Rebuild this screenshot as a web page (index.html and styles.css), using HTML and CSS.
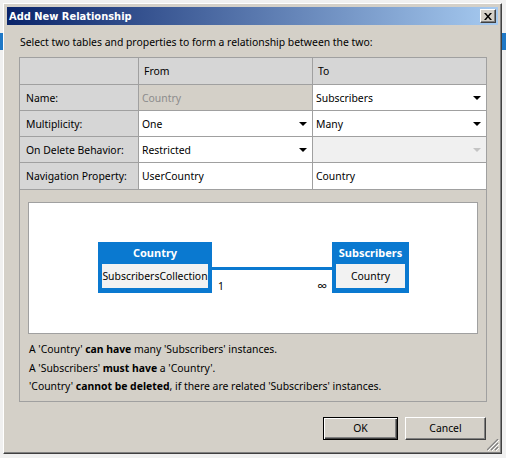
FILE: index.html
```html
<!DOCTYPE html>
<html lang="en">
<head>
    <meta charset="UTF-8">
    <title>Add New Relationship</title>
    <link rel="stylesheet" href="styles.css">
</head>
<body>
    <div class="dialog">
        <div class="title-bar">
            <span class="title-text">Add New Relationship</span>
            <button class="close-btn" aria-label="Close">
                <svg width="8" height="7" viewBox="0 0 8 7"><path d="M0 0h2l2 2.5L6 0h2L5 3.5 8 7H6L4 4.5 2 7H0l3-3.5z" fill="#000"/></svg>
            </button>
        </div>
        <div class="dialog-body">
            <p class="intro">Select two tables and properties to form a relationship between the two:</p>
            <div class="panel">
                <div class="grid">
                    <div class="cell head"></div>
                    <div class="cell head col-head">From</div>
                    <div class="cell head col-head">To</div>

                    <div class="cell head label">Name:</div>
                    <div class="cell value readonly">Country</div>
                    <div class="cell value">Subscribers <span class="arrow"></span></div>

                    <div class="cell head label">Multiplicity:</div>
                    <div class="cell value">One <span class="arrow"></span></div>
                    <div class="cell value">Many <span class="arrow"></span></div>

                    <div class="cell head label">On Delete Behavior:</div>
                    <div class="cell value">Restricted <span class="arrow"></span></div>
                    <div class="cell value disabled"><span></span><span class="arrow"></span></div>

                    <div class="cell head label">Navigation Property:</div>
                    <div class="cell value">UserCountry</div>
                    <div class="cell value">Country</div>
                </div>

                <div class="diagram">
                    <div class="entity entity-from">
                        <div class="entity-name">Country</div>
                        <div class="entity-prop">SubscribersCollection</div>
                    </div>
                    <div class="link">
                        <span>1</span>
                        <span class="many">∞</span>
                    </div>
                    <div class="entity entity-to">
                        <div class="entity-name">Subscribers</div>
                        <div class="entity-prop">Country</div>
                    </div>
                </div>

                <div class="summary">
                    <p>A 'Country' <b>can have</b> many 'Subscribers' instances.</p>
                    <p>A 'Subscribers' <b>must have</b> a 'Country'.</p>
                    <p>'Country' <b>cannot be deleted</b>, if there are related 'Subscribers' instances.</p>
                </div>
            </div>
            <div class="buttons">
                <button class="btn btn-default">OK</button>
                <button class="btn btn-cancel">Cancel</button>
            </div>
        </div>
        <svg class="grip" width="12" height="12" viewBox="0 0 12 12">
            <path d="M11 0L0 11M11 4L4 11M11 8L8 11" stroke="#808080" stroke-width="1.2"/>
            <path d="M12 1L1 12M12 5L5 12M12 9L9 12" stroke="#ffffff" stroke-width="1"/>
        </svg>
    </div>
</body>
</html>
```

FILE: styles.css
```css
* {
    box-sizing: border-box;
}
html, body {
    margin: 0;
}
body {
    width: 506px;
    height: 458px;
    padding: 3px 0 0 3px;
    overflow: hidden;
    background: linear-gradient(to bottom, #f0f0f0 0, #f0f0f0 33px, #1f78c6 33px, #1f78c6 50px, #f0f0f0 50px);
    font-family: "Noto Sans", "Open Sans", sans-serif;
    font-size: 10.4px;
    color: #000;
}
.dialog {
    position: relative;
    width: 499px;
    height: 451px;
    padding: 3px;
    background: #d4d0c8;
    border: 1px solid;
    border-color: #ffffff #404040 #404040 #ffffff;
    box-shadow: inset -1px -1px #808080;
}
.title-bar {
    display: flex;
    align-items: center;
    justify-content: space-between;
    height: 18px;
    padding: 0 2px;
    background: linear-gradient(to right, #0a246a, #a6caf0);
}
.title-text {
    color: #fff;
    font-family: "DejaVu Sans Condensed", "Liberation Sans", sans-serif;
    font-weight: bold;
    font-size: 11px;
}
.close-btn {
    display: flex;
    align-items: center;
    justify-content: center;
    width: 16px;
    height: 14px;
    padding: 0;
    background: #d4d0c8;
    border: 1px solid;
    border-color: #ffffff #404040 #404040 #ffffff;
    box-shadow: inset -1px -1px #808080;
}
.dialog-body {
    padding: 0 11px 0 12px;
}
.intro {
    margin: 9px 0 7px;
    padding-left: 1px;
    line-height: 16px;
}
.panel {
    border: 1px solid #a0a0a0;
    padding-bottom: 5px;
}
.grid {
    display: grid;
    grid-template-columns: 118px 173px 173px;
    grid-template-rows: 26px 25px 25px 25px 26px;
    gap: 1px;
    background: #a0a0a0;
    border-bottom: 1px solid #a0a0a0;
}
.cell {
    display: flex;
    align-items: center;
    justify-content: space-between;
    background: #fff;
    padding: 0 5px 0 3px;
    white-space: nowrap;
}
.cell.head {
    background: #d6d6d6;
    padding-left: 6px;
}
.cell.col-head {
    padding-left: 5px;
}
.cell.readonly {
    background: #d4d0c8;
    color: #8c8c8c;
}
.cell.disabled {
    background: #f0f0f0;
}
.arrow {
    width: 0;
    height: 0;
    border-left: 4px solid transparent;
    border-right: 4px solid transparent;
    border-top: 4px solid #000;
}
.disabled .arrow {
    border-top-color: #c4c4c4;
}
.diagram {
    display: flex;
    align-items: flex-start;
    height: 132px;
    margin: 12px 8px 0;
    padding: 39px 0 0 69px;
    background: #fff;
    border: 1px solid #a0a0a0;
}
.entity {
    background: #0a79d0;
    padding: 0 4px 5px;
    text-align: center;
}
.entity-from {
    width: 114px;
}
.entity-to {
    width: 77px;
}
.entity-name {
    height: 22px;
    line-height: 22px;
    color: #fff;
    font-weight: bold;
    font-size: 11px;
}
.entity-prop {
    height: 24px;
    line-height: 24px;
    background: #f2f2f2;
    white-space: nowrap;
}
.link {
    display: flex;
    justify-content: space-between;
    width: 120px;
    margin-top: 25px;
    padding: 9px 5px 0 6px;
    border-top: 3px solid #0a79d0;
    line-height: 14px;
}
.link .many {
    font-size: 14px;
}
.summary {
    margin-top: 6px;
    padding-left: 9px;
}
.summary p {
    margin: 0;
    line-height: 18.5px;
}
.buttons {
    display: flex;
    justify-content: flex-end;
    gap: 7px;
    margin-top: 15px;
    padding-right: 1px;
}
.btn {
    height: 23px;
    padding: 0;
    font: inherit;
    color: #000;
    background: #d4d0c8;
    border: 1px solid;
    border-color: #ffffff #404040 #404040 #ffffff;
    box-shadow: inset -1px -1px #808080;
}
.btn-default {
    width: 75px;
    border-color: #000;
    box-shadow: inset 1px 1px #ffffff, inset -1px -1px #404040, inset -2px -2px #808080;
}
.btn-cancel {
    width: 81px;
}
.grip {
    position: absolute;
    right: 2px;
    bottom: 2px;
}
```
